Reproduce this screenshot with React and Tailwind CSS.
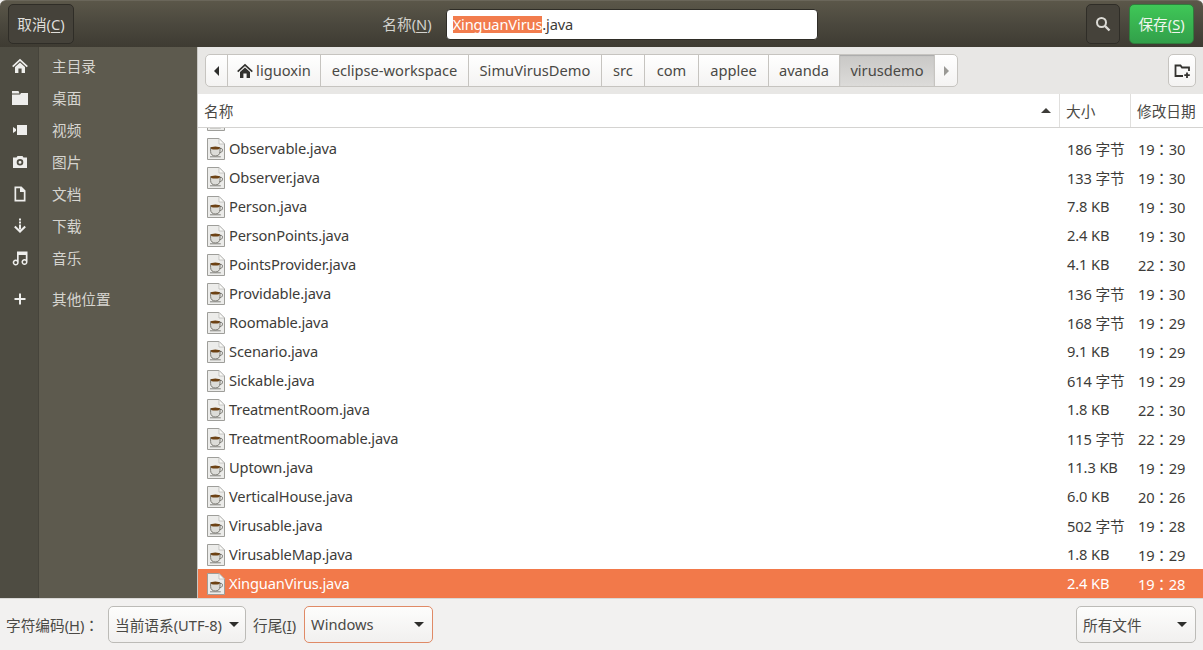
const FONT = "font-['Noto_Sans','Noto_Sans_CJK_SC',sans-serif]";
const TC = "font-['Noto_Sans','Noto_Sans_CJK_TC',sans-serif]";

const files = [
  ["Observable.java", "186 字节", "19：30"],
  ["Observer.java", "133 字节", "19：30"],
  ["Person.java", "7.8 KB", "19：30"],
  ["PersonPoints.java", "2.4 KB", "19：30"],
  ["PointsProvider.java", "4.1 KB", "22：30"],
  ["Providable.java", "136 字节", "19：30"],
  ["Roomable.java", "168 字节", "19：29"],
  ["Scenario.java", "9.1 KB", "19：29"],
  ["Sickable.java", "614 字节", "19：29"],
  ["TreatmentRoom.java", "1.8 KB", "22：30"],
  ["TreatmentRoomable.java", "115 字节", "22：29"],
  ["Uptown.java", "11.3 KB", "19：29"],
  ["VerticalHouse.java", "6.0 KB", "20：26"],
  ["Virusable.java", "502 字节", "19：28"],
  ["VirusableMap.java", "1.8 KB", "19：29"],
  ["XinguanVirus.java", "2.4 KB", "19：28"],
];

function Home({ color }) {
  return (
    <>
      <path d="M.7 8.6L8 1.8L15.3 8.6" fill="none" stroke={color} strokeWidth="1.7" />
      <path d="M3 9L8 4.4L13 9V15H9.6V10.4H6.4V15H3Z" fill={color} />
    </>
  );
}

function JavaIcon() {
  return (
    <svg width="18" height="22" viewBox="0 0 18 22" className="shrink-0">
      <path d="M.5.5H12L17.5 6V21.5H.5Z" fill="#ececea" stroke="#9e9e9a" />
      <path d="M12 .5V6H17.5Z" fill="#fafaf8" stroke="#b5b5b1" strokeWidth=".7" />
      <path d="M3.6 9.5H13V13.5C13 16.5 11 18 8.3 18C5.6 18 3.6 16.5 3.6 13.5Z" fill="#dcdcd8" stroke="#6f6e68" strokeWidth=".9" />
      <ellipse cx="8.3" cy="9.9" rx="4.5" ry="1.5" fill="#6d4214" />
      <path d="M13 10.5H14.4C16 10.5 16 14.6 12.8 14.6" fill="none" stroke="#6f6e68" strokeWidth="1" />
      <path d="M3 18.8H13.8" stroke="#85857f" strokeWidth="1" />
    </svg>
  );
}

function SideIcon({ name }) {
  const p = { width: 16, height: 16, viewBox: "0 0 16 16", fill: "#eeeeec" };
  if (name === "home") return <svg {...p}><Home color="#eeeeec" /></svg>;
  if (name === "folder")
    return <svg {...p}><path d="M0 1H6.5L7.5 3.5H0ZM0 4.5H8L9 3H16V15H0Z" /></svg>;
  if (name === "video")
    return <svg {...p}><path d="M5 3H15V13H5ZM1 5L4 7V9L1 11Z" /></svg>;
  if (name === "camera")
    return <svg {...p}><path fillRule="evenodd" d="M5.5 2H10.5L11.5 3.5H15V14H1V3.5H4.5ZM8 5A3.3 3.3 0 1 0 8 11.6A3.3 3.3 0 1 0 8 5ZM8 6.8A1.5 1.5 0 1 1 8 9.8A1.5 1.5 0 1 1 8 6.8Z" /></svg>;
  if (name === "file")
    return <svg {...p}><path fillRule="evenodd" d="M2.5 .5H9.5L13.5 4.5V15.5H2.5ZM4.2 2.2V13.8H11.8V6H8V2.2Z" /></svg>;
  if (name === "download")
    return (
      <svg {...p}>
        <path d="M7 .5H9V2.5H7ZM7 3.5H9V5.5H7ZM7 6.5H9V11.5H7Z" />
        <path d="M2.8 8.5L8 13.5L13.2 8.5" fill="none" stroke="#eeeeec" strokeWidth="2" />
      </svg>
    );
  if (name === "music")
    return <svg {...p}><path fillRule="evenodd" d="M5 1.5H15.5V12A3 3 0 1 1 13.8 9.3V5H6.7V12.5A3 3 0 1 1 5 9.8ZM3.7 11A1.5 1.5 0 1 0 3.7 14A1.5 1.5 0 1 0 3.7 11ZM12.5 10.5A1.5 1.5 0 1 0 12.5 13.5A1.5 1.5 0 1 0 12.5 10.5Z" /></svg>;
  return <svg {...p}><path d="M7 2.5H9V7H13.5V9H9V13.5H7V9H2.5V7H7Z" /></svg>;
}

function SideRow({ icon, label, className = "h-8" }) {
  return (
    <div className={`flex items-center ${className}`}>
      <div className="w-[39px] flex justify-center shrink-0"><SideIcon name={icon} /></div>
      <span className="ml-[13px] text-[#d6d5d0]">{label}</span>
    </div>
  );
}

function Crumb({ w, active, children }) {
  return (
    <div
      style={{ width: w }}
      className={`h-full flex items-center justify-center pb-[1px] border-r border-[#c6c4c0] ${active ? "bg-gradient-to-b from-[#c9c8c6] to-[#dcdbd9] shadow-[inset_0_1px_1px_#aaa]" : ""}`}
    >
      {children}
    </div>
  );
}

function Combo({ className, label, labelClass = "" }) {
  return (
    <div className={`h-[37px] rounded-[5px] border flex items-center justify-between bg-gradient-to-b from-[#fdfdfc] to-[#f1f0ef] ${className}`}>
      <span className={labelClass}>{label}</span>
      <span className="w-0 h-0 border-x-[5px] border-x-transparent border-t-[5px] border-t-[#2e2e2c]" />
    </div>
  );
}

const U = ({ children }) => <span className="underline underline-offset-2">{children}</span>;

export default function App() {
  return (
    <div className={`w-[1203px] h-[650px] overflow-hidden flex flex-col bg-[#f2f1f0] text-[14.67px] text-[#3d3c39] ${FONT}`}>
      {/* header */}
      <header className="h-[47px] shrink-0 flex items-center pl-2 pr-[9px] bg-gradient-to-b from-[#5b5749] via-[#4b483e] to-[#3e3b32] border-t border-[#6a665a] rounded-t-[6px]">
        <button className="w-[66px] h-10 rounded-[5px] border border-[#2f2d27] bg-[#45423a] text-[#dfdeda] -mt-px">
          取消(<U>C</U>)
        </button>
        <div className="flex-1 flex items-center justify-center pl-[40px]">
          <span className="text-[#d3d2cd] mr-[14px]">名称(<U>N</U>)</span>
          <div className="w-[372px] shrink-0 h-[31px] rounded-[4px] bg-white flex items-center pl-[6px] text-[#3d3c39] border border-[#2f2d27] tracking-[-0.15px]">
            <span className="bg-[#f27c4d] text-white leading-[17px]">XinguanVirus</span>.java
          </div>
        </div>
        <button className="w-[34px] h-10 rounded-[5px] border border-[#2f2d27] bg-[#45423a] flex items-center justify-center -mt-px">
          <svg width="16" height="16" viewBox="0 0 16 16" fill="none" stroke="#dcdbd6" strokeWidth="2">
            <circle cx="6.5" cy="6.5" r="4.5" />
            <path d="M10 10L14.5 14.5" strokeWidth="2.4" />
          </svg>
        </button>
        <button className="ml-[9px] w-[65px] h-10 rounded-[5px] bg-gradient-to-b from-[#3fc757] to-[#32a04a] border border-[#2f7d3c] text-[#f0f6ee] -mt-px">
          保存(<U>S</U>)
        </button>
      </header>

      <div className="flex-1 flex min-h-0">
        {/* sidebar */}
        <aside className="relative w-[198px] shrink-0 bg-[#5d5a4e] border-r border-[#c9c8c4] pt-[3px]">
          <div className="absolute inset-y-0 left-0 w-[39px] bg-[#4e4c42] border-r border-[#46443b]" />
          <div className="relative">
            <SideRow icon="home" label="主目录" />
            <SideRow icon="folder" label="桌面" />
            <SideRow icon="video" label="视频" />
            <SideRow icon="camera" label="图片" />
            <SideRow icon="file" label="文档" />
            <SideRow icon="download" label="下载" />
            <SideRow icon="music" label="音乐" />
            <SideRow icon="plus" label="其他位置" className="h-8 mt-[9px]" />
          </div>
        </aside>

        {/* main */}
        <main className="flex-1 min-w-0 flex flex-col bg-white">
          <div className="h-[47px] shrink-0 bg-[#e8e7e5] flex items-center pl-[7px] pr-[7px]">
            <div className="h-[33px] flex rounded-[5px] border border-[#c6c4c0] bg-gradient-to-b from-[#ffffff] to-[#f4f3f2] overflow-hidden text-[#4a4945]">
              <Crumb w={22}><span className="mt-[1px] w-0 h-0 border-y-[5px] border-y-transparent border-r-[5px] border-r-[#2e2e2c]" /></Crumb>
              <Crumb w={93}>
                <svg width="16" height="16" viewBox="0 0 16 16" className="mr-[3px] mt-[1px]">
                  <Home color="#33322f" />
                </svg>
                liguoxin
              </Crumb>
              <Crumb w={148}>eclipse-workspace</Crumb>
              <Crumb w={133}>SimuVirusDemo</Crumb>
              <Crumb w={43}>src</Crumb>
              <Crumb w={54}>com</Crumb>
              <Crumb w={70}>applee</Crumb>
              <Crumb w={71}>avanda</Crumb>
              <Crumb w={95} active>virusdemo</Crumb>
              <div className="w-[22px] flex items-center justify-center">
                <span className="w-0 h-0 border-y-[5px] border-y-transparent border-l-[5px] border-l-[#9a9995]" />
              </div>
            </div>
            <button className="ml-auto w-[28px] h-[33px] rounded-[5px] border border-[#c6c4c0] bg-gradient-to-b from-[#ffffff] to-[#f4f3f2] flex items-center justify-center">
              <svg width="17" height="16" viewBox="0 0 17 16" fill="none" stroke="#33322f" strokeWidth="1.8">
                <path d="M9 13H1.5V2.5H6.5L8 4.5H15V8" />
                <path d="M13 9.5V15M10.3 12.2H15.8" strokeWidth="1.8" />
              </svg>
            </button>
          </div>

          <div className="h-[34px] shrink-0 flex border-b border-[#d4d3d1] text-[#4a4945]">
            <div className="flex-1 flex items-center justify-between pl-[6px] pr-[8px] border-r border-[#e0dfdd]">
              <span>名称</span>
              <span className="w-0 h-0 border-x-[5px] border-x-transparent border-b-[5px] border-b-[#3d3c39]" />
            </div>
            <div className="w-[71px] flex items-center pl-[6px] border-r border-[#e0dfdd]">大小</div>
            <div className="w-[72px] flex items-center pl-[6px] whitespace-nowrap overflow-hidden">修改日期</div>
          </div>

          <div className="flex-1 min-h-0 overflow-hidden flex flex-col justify-end">
            <div className="h-[29px] shrink-0 flex items-center pl-[9px]"><JavaIcon /></div>
            {files.map(([name, size, time], i) => {
              const sel = i === files.length - 1;
              return (
                <div key={name} className={`h-[29px] shrink-0 flex items-center ${sel ? "bg-[#f2794a] text-white" : "text-[#3d3c39]"}`}>
                  <div className="flex-1 flex items-center pl-[9px] gap-[4px] min-w-0">
                    <JavaIcon />
                    <span className="pb-[2px] tracking-[-0.15px]">{name}</span>
                  </div>
                  <div className={`w-[71px] pl-[8px] whitespace-nowrap tracking-[-0.1px] ${/字/.test(size) ? "" : "pb-[2px]"}`}>{size}</div>
                  <div className={`w-[73px] pl-[8px] whitespace-nowrap tracking-[-0.2px] ${TC}`}>{time}</div>
                </div>
              );
            })}
          </div>
        </main>
      </div>

      {/* footer */}
      <footer className="h-[52px] shrink-0 flex items-center pl-[6px] pr-[7px] bg-[#f2f1f0] border-t border-[#d9d8d6] text-[#4a4945]">
        <span className="w-[102px] whitespace-nowrap">字符编码(<U>H</U>)<span className={TC}>：</span></span>
        <Combo className="w-[138px] border-[#bcbbb7] pl-[6px] pr-[6px]" label="当前语系(UTF-8)" />
        <span className="ml-[7px] w-[51px] whitespace-nowrap">行尾(<U>I</U>)</span>
        <Combo className="w-[129px] border-[#e08a66] pl-[6px] pr-[8px]" label="Windows" labelClass="pb-[2px]" />
        <Combo className="ml-auto w-[120px] border-[#bcbbb7] pl-[6px] pr-[8px]" label="所有文件" />
      </footer>
    </div>
  );
}
